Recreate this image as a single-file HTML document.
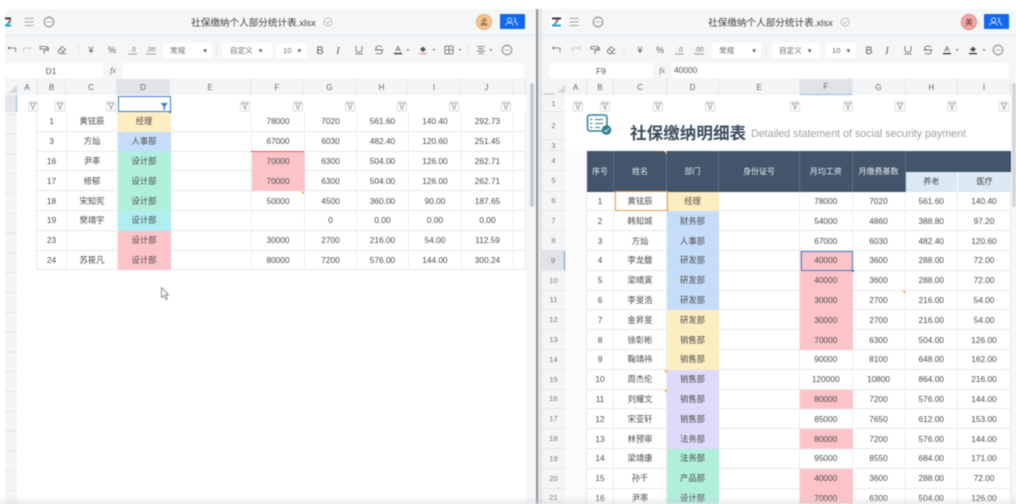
<!DOCTYPE html>
<html><head><meta charset="utf-8"><style>
*{margin:0;padding:0;box-sizing:border-box}
html,body{width:1016px;height:504px;overflow:hidden;background:#fff}
body{font-family:"Liberation Sans","Noto Sans CJK SC",sans-serif;color:#4c4c4c;font-size:8.3px}
#root{position:absolute;left:0;top:0;width:1016px;height:504px;overflow:hidden;filter:blur(.5px);background:#fff}
.a{position:absolute}
.w{background:#fff;border-radius:1px}
.t{position:absolute;display:flex;align-items:center;justify-content:center;white-space:nowrap}
.g{position:absolute;display:grid;grid-auto-rows:19.8px}
.g>b{font-weight:400;display:flex;align-items:center;justify-content:center;border-right:1px solid #eaecee;border-bottom:1px solid #e6e8ea;background:#fff;color:#4c4c4c;white-space:nowrap}
.g>b.y{background:#fdeec1;border-right-color:#fdeec1;border-bottom-color:#fdeec1}
.g>b.l{background:#c5ddf9;border-right-color:#c5ddf9;border-bottom-color:#c5ddf9}
.g>b.n{background:#b1efdd;border-right-color:#b1efdd;border-bottom-color:#b1efdd}
.g>b.c{background:#b1eef0;border-right-color:#b1eef0;border-bottom-color:#b1eef0}
.g>b.p{background:#fcc4c9;border-right-color:#fcc4c9;border-bottom-color:#fcc4c9}
.g>b.u{background:#e1d9fa;border-right-color:#e1d9fa;border-bottom-color:#e1d9fa}
.ch{position:absolute;top:79px;height:16px;background:#f3f5f7;display:flex;align-items:center;justify-content:center;border-right:1px solid #e6e8ea;color:#666;font-size:8px}
.rh{position:absolute;left:542px;width:23px;display:flex;align-items:center;justify-content:center;background:#f3f5f7;border-bottom:1px solid #e4e6e9;color:#777;font-size:7.6px}
.hd{position:absolute;display:flex;align-items:center;justify-content:center;background:#42556a;color:#e8edf2;border-right:1px solid #5f6f82;font-size:8px}
.sel{position:absolute;height:15px;background:#fff;top:42.5px;color:#666;font-size:7.6px;display:flex;align-items:center}
</style></head><body><div id="root">

<!-- panes base -->
<div class="a" style="left:5px;top:9px;width:531px;height:495px;background:#f4f6f8;border-top-left-radius:6px"></div>
<div class="a" style="left:538px;top:9px;width:478px;height:495px;background:#f4f6f8"></div>
<div class="a" style="left:536px;top:9px;width:2px;height:495px;background:#8f9397"></div>
<div class="a" style="left:538px;top:9px;width:4px;height:495px;background:#e3e5e7"></div>
<div class="a" style="left:5px;top:35px;width:531px;height:1px;background:#e3e6e9"></div>
<div class="a" style="left:538px;top:35px;width:478px;height:1px;background:#e3e6e9"></div>

<!-- titles -->
<div class="t" style="left:190px;top:14px;width:127px;height:16px;font-size:9.6px;color:#444">社保缴纳个人部分统计表.xlsx</div>
<div class="t" style="left:707px;top:14px;width:127px;height:16px;font-size:9.6px;color:#444">社保缴纳个人部分统计表.xlsx</div>

<!-- avatars and share -->
<div class="t" style="left:476px;top:14px;width:16px;height:16px;border-radius:50%;background:#f6c491;border:1px solid #f0a862;font-size:8px;color:#5b4326">孟</div>
<div class="t" style="left:961px;top:14px;width:16px;height:16px;border-radius:50%;background:#f7a9a9;border:1px solid #ea7d7d;font-size:8px;color:#5b3030">美</div>
<div class="a" style="left:500px;top:14px;width:25px;height:15px;background:#1267ee;border-radius:1px"></div>
<div class="a" style="left:984px;top:14px;width:25px;height:15px;background:#1267ee;border-radius:1px"></div>

<!-- selects left -->
<div class="sel" style="left:163px;width:49px;padding-left:7px">常规<span style="margin-left:18px">▾</span></div>
<div class="sel" style="left:222px;width:50px;padding-left:8px">自定义<span style="margin-left:6px">▾</span></div>
<div class="sel" style="left:276px;width:31px;padding-left:7px">10<span style="margin-left:6px">▾</span></div>
<!-- selects right -->
<div class="sel" style="left:712px;width:49px;padding-left:7px">常规<span style="margin-left:18px">▾</span></div>
<div class="sel" style="left:772px;width:48px;padding-left:7px">自定义<span style="margin-left:6px">▾</span></div>
<div class="sel" style="left:826px;width:30px;padding-left:6px">10<span style="margin-left:6px">▾</span></div>

<!-- formula bars -->
<div class="t w" style="left:5px;top:63px;width:98px;height:15px;color:#555;font-size:8.4px;padding-right:6px">D1</div>
<div class="a w" style="left:123px;top:63px;width:401px;height:15px"></div>
<div class="t w" style="left:549px;top:63px;width:104px;height:15px;color:#555;font-size:8.4px">F9</div>
<div class="a w" style="left:672px;top:63px;width:337px;height:15px;font-size:8.4px;line-height:15px;padding-left:2px;color:#555">40000</div>
<div class="t" style="left:108px;top:63px;width:10px;height:15px;font:italic 8px 'Liberation Serif',serif;color:#666">fx</div>
<div class="t" style="left:657px;top:63px;width:10px;height:15px;font:italic 8px 'Liberation Serif',serif;color:#666">fx</div>

<!-- column headers left -->
<div class="a" style="left:5px;top:79px;width:12px;height:16px;background:#f3f5f7"></div>
<div class="ch" style="left:17px;width:21px">A</div>
<div class="ch" style="left:38px;width:28px">B</div>
<div class="ch" style="left:66px;width:51px">C</div>
<div class="ch" style="left:117px;width:53px;background:#e1e3e6">D</div>
<div class="ch" style="left:170px;width:81px">E</div>
<div class="ch" style="left:251px;width:53px">F</div>
<div class="ch" style="left:304px;width:52px">G</div>
<div class="ch" style="left:356px;width:52px">H</div>
<div class="ch" style="left:408px;width:53px">I</div>
<div class="ch" style="left:461px;width:52px">J</div>
<div class="ch" style="left:513px;width:13px"></div>

<!-- column headers right -->
<div class="a" style="left:542px;top:79px;width:23px;height:16px;background:#f3f5f7"></div>
<div class="ch" style="left:565px;width:22px">A</div>
<div class="ch" style="left:587px;width:27px">B</div>
<div class="ch" style="left:614px;width:53px">C</div>
<div class="ch" style="left:667px;width:52px">D</div>
<div class="ch" style="left:719px;width:81px">E</div>
<div class="ch" style="left:800px;width:52.5px;background:#e1e3e6;border-bottom:1px solid #8db8ea">F</div>
<div class="ch" style="left:852.5px;width:53px">G</div>
<div class="ch" style="left:905.5px;width:52.5px">H</div>
<div class="ch" style="left:958px;width:53px">I</div>

<!-- left sheet -->
<div class="a" style="left:17px;top:95px;width:509px;height:409px;background:#fff"></div>
<div class="a" style="left:5px;top:95px;width:12px;height:409px;background:repeating-linear-gradient(#f3f5f7 0,#f3f5f7 18.8px,#e2e4e7 18.8px,#e2e4e7 19.8px)"></div>
<div class="a" style="left:5px;top:95px;width:11px;height:17px;background:#e4e6e9"></div>
<div class="a" style="left:16px;top:95px;width:1px;height:17px;background:#8db8ea"></div>
<div class="g" style="left:36px;top:112px;width:490px;border-left:1px solid #e6e8ea;grid-template-columns:30px 51px 53px 81px 53px 52px 52px 53px 52px 12px">
<b>1</b><b>黄铉辰</b><b class="y">经理</b><b></b><b>78000</b><b>7020</b><b>561.60</b><b>140.40</b><b>292.73</b><b></b>
<b>3</b><b>方灿</b><b class="l">人事部</b><b></b><b>67000</b><b>6030</b><b>482.40</b><b>120.60</b><b>251.45</b><b></b>
<b>16</b><b>尹率</b><b class="n">设计部</b><b></b><b class="p">70000</b><b>6300</b><b>504.00</b><b>126.00</b><b>262.71</b><b></b>
<b>17</b><b>修郁</b><b class="n">设计部</b><b></b><b class="p">70000</b><b>6300</b><b>504.00</b><b>126.00</b><b>262.71</b><b></b>
<b>18</b><b>宋知宪</b><b class="n">设计部</b><b></b><b>50000</b><b>4500</b><b>360.00</b><b>90.00</b><b>187.65</b><b></b>
<b>19</b><b>樊靖宇</b><b class="c">设计部</b><b></b><b></b><b>0</b><b>0.00</b><b>0.00</b><b>0.00</b><b></b>
<b>23</b><b></b><b class="p">设计部</b><b></b><b>30000</b><b>2700</b><b>216.00</b><b>54.00</b><b>112.59</b><b></b>
<b>24</b><b>苏筱凡</b><b class="p">设计部</b><b></b><b>80000</b><b>7200</b><b>576.00</b><b>144.00</b><b>300.24</b><b></b>
</div>
<div class="a" style="left:251px;top:150.5px;width:53px;height:1.5px;background:#d9605f"></div>
<div class="a" style="left:117.5px;top:95.5px;width:53px;height:16.5px;border:1px solid #3f79cf"></div>
<div class="a" style="left:168.5px;top:110.5px;width:2.5px;height:2.5px;background:#2f6fd0"></div>
<div class="a" style="left:530px;top:83px;width:4px;height:124px;background:#c9cdd1;border-radius:2px"></div>

<!-- right sheet -->
<div class="a" style="left:565px;top:95px;width:446px;height:409px;background:#fff"></div>
<div class="a" style="left:565px;top:151px;width:22px;height:353px;background:#fafbfc"></div>
<div class="rh" style="top:95px;height:17px">1</div>
<div class="rh" style="top:112px;height:28px">2</div>
<div class="rh" style="top:140px;height:11px">3</div>
<div class="rh" style="top:151px;height:20px">4</div>
<div class="rh" style="top:171px;height:20.6px">5</div>
<div class="rh" style="top:191.6px;height:19.8px">6</div>
<div class="rh" style="top:211.4px;height:19.8px">7</div>
<div class="rh" style="top:231.2px;height:19.8px">8</div>
<div class="rh" style="top:251px;height:19.8px;background:#e1e3e6;border-right:1px solid #6d9fe0">9</div>
<div class="rh" style="top:270.8px;height:19.8px">10</div>
<div class="rh" style="top:290.6px;height:19.8px">11</div>
<div class="rh" style="top:310.4px;height:19.8px">12</div>
<div class="rh" style="top:330.2px;height:19.8px">13</div>
<div class="rh" style="top:350px;height:19.8px">14</div>
<div class="rh" style="top:369.8px;height:19.8px">15</div>
<div class="rh" style="top:389.6px;height:19.8px">16</div>
<div class="rh" style="top:409.4px;height:19.8px">17</div>
<div class="rh" style="top:429.2px;height:19.8px">18</div>
<div class="rh" style="top:449px;height:19.8px">19</div>
<div class="rh" style="top:468.8px;height:19.8px">20</div>
<div class="rh" style="top:488.6px;height:19.8px">21</div>

<div class="a" style="left:630px;top:123px;font-size:16.6px;font-weight:700;line-height:22px;color:#3c4d5f;white-space:nowrap">社保缴纳明细表</div>
<div class="a" style="left:751px;top:126px;font-size:10.7px;line-height:16px;color:#9a9fa5;white-space:nowrap">Detailed statement of social security payment</div>

<!-- table header -->
<div class="hd" style="left:587px;top:151px;width:27px;height:40.6px">序号</div>
<div class="hd" style="left:614px;top:151px;width:53px;height:40.6px">姓名</div>
<div class="hd" style="left:667px;top:151px;width:52px;height:40.6px">部门</div>
<div class="hd" style="left:719px;top:151px;width:81px;height:40.6px">身份证号</div>
<div class="hd" style="left:800px;top:151px;width:52.5px;height:40.6px">月均工资</div>
<div class="hd" style="left:852.5px;top:151px;width:53px;height:40.6px">月缴费基数</div>
<div class="hd" style="left:905.5px;top:151px;width:105.5px;height:20.5px;border-right:0"></div>
<div class="t" style="left:905.5px;top:171.5px;width:52.5px;height:20.1px;background:#dbe9f5;border-right:1px solid #fff;color:#444;font-size:8px">养老</div>
<div class="t" style="left:958px;top:171.5px;width:53px;height:20.1px;background:#dbe9f5;color:#444;font-size:8px">医疗</div>

<div class="g" style="left:586px;top:191.6px;width:425px;border-left:1px solid #e6e8ea;grid-template-columns:27px 53px 52px 81px 52.5px 53px 52.5px 53px">
<b>1</b><b>黄铉辰</b><b class="y">经理</b><b></b><b>78000</b><b>7020</b><b>561.60</b><b>140.40</b>
<b>2</b><b>韩知城</b><b class="l">财务部</b><b></b><b>54000</b><b>4860</b><b>388.80</b><b>97.20</b>
<b>3</b><b>方灿</b><b class="l">人事部</b><b></b><b>67000</b><b>6030</b><b>482.40</b><b>120.60</b>
<b>4</b><b>李龙馥</b><b class="l">研发部</b><b></b><b class="p">40000</b><b>3600</b><b>288.00</b><b>72.00</b>
<b>5</b><b>梁晴寅</b><b class="l">研发部</b><b></b><b class="p">40000</b><b>3600</b><b>288.00</b><b>72.00</b>
<b>6</b><b>李旻浩</b><b class="l">研发部</b><b></b><b class="p">30000</b><b>2700</b><b>216.00</b><b>54.00</b>
<b>7</b><b>金昇旻</b><b class="y">研发部</b><b></b><b class="p">30000</b><b>2700</b><b>216.00</b><b>54.00</b>
<b>8</b><b>徐彰彬</b><b class="y">销售部</b><b></b><b class="p">70000</b><b>6300</b><b>504.00</b><b>126.00</b>
<b>9</b><b>鞠靖祎</b><b class="y">销售部</b><b></b><b>90000</b><b>8100</b><b>648.00</b><b>162.00</b>
<b>10</b><b>周杰伦</b><b class="u">销售部</b><b></b><b>120000</b><b>10800</b><b>864.00</b><b>216.00</b>
<b>11</b><b>刘耀文</b><b class="u">销售部</b><b></b><b class="p">80000</b><b>7200</b><b>576.00</b><b>144.00</b>
<b>12</b><b>宋亚轩</b><b class="u">销售部</b><b></b><b>85000</b><b>7650</b><b>612.00</b><b>153.00</b>
<b>13</b><b>林预审</b><b class="u">法务部</b><b></b><b class="p">80000</b><b>7200</b><b>576.00</b><b>144.00</b>
<b>14</b><b>梁靖康</b><b class="n">法务部</b><b></b><b>95000</b><b>8550</b><b>684.00</b><b>171.00</b>
<b>15</b><b>孙千</b><b class="n">产品部</b><b></b><b class="p">40000</b><b>3600</b><b>288.00</b><b>72.00</b>
<b>16</b><b>尹率</b><b class="n">设计部</b><b></b><b class="p">70000</b><b>6300</b><b>504.00</b><b>126.00</b>
</div>
<div class="a" style="left:614.5px;top:191.4px;width:53px;height:20px;border:1px solid #e59a3c"></div>
<div class="a" style="left:800.5px;top:251px;width:52.5px;height:20px;border:1px solid #3f79cf"></div>
<div class="a" style="left:851.5px;top:269.5px;width:2.5px;height:2.5px;background:#2f6fd0"></div>
<div class="a" style="left:1012px;top:83px;width:4px;height:124px;background:#d5d8db;border-radius:2px"></div>

<!-- icons -->
<svg class="a" style="left:0;top:0;z-index:3" width="1016" height="504" viewBox="0 0 1016 504">
<defs>
<g id="f"><rect x="-4.5" y="-4.5" width="9" height="9.5" rx="1" fill="#fff" stroke="#cfd2d5" stroke-width=".8"/><path d="M-2.8-2.8H2.800L.8 0V2.800H-.8V0Z" fill="none" stroke="#808488" stroke-width=".7"/></g>
<g id="ham" fill="none" stroke="#888" stroke-width=".8"><path d="M-4.500-3.500h9M-4.500 0h9M-4.500 3.500h9"/></g>
<g id="more"><circle r="4.800" fill="none" stroke="#666" stroke-width=".8"/><circle cx="-2" r=".55" fill="#666"/><circle r=".55" fill="#666"/><circle cx="2" r=".55" fill="#666"/></g>
<g id="ck"><circle r="4" fill="none" stroke="#aaa" stroke-width=".7"/><path d="M-1.800 0l1.300 1.400L2-1.300" fill="none" stroke="#aaa" stroke-width=".7"/></g>
<g id="sh" fill="none" stroke="#d6e6ff" stroke-width=".9"><circle cx="-2.500" cy="-2" r="2.100"/><path d="M-6.500 3.500Q-6 .8-2.500.8T1.500 3.500"/><path d="M1.800-4A2 2 0 0 1 2.500-.3Q5 .2 5.500 3.500"/></g>
<g id="z"><path d="M-4.500-4.500H4.500V-2.600H-4.500Z" fill="#243447"/><path d="M3-2.600H.8L-2-.2H.4Z" fill="#e2393b"/><path d="M-3.800 2.600H-1.500L2 -.2H-.4Z" fill="#19a974"/><path d="M-4.500 2.600H4.500V4.500H-4.500Z" fill="#1f9bd8"/></g>
<g id="un" fill="none" stroke="#666" stroke-width=".8"><path d="M-4-2H3.500V2M-4-2l1.600-1.200M-4-2l1.600 1.200"/></g>
<g id="re" fill="none" stroke="#c4c7ca" stroke-width=".8"><path d="M4-2H-3.500V2M4-2L2.400-3.200M4-2L2.400-.8"/></g>
<g id="pa" fill="none" stroke="#666" stroke-width=".8"><path d="M-4-3.500H3V-1H-4ZM3-2.200H4.500V.4H0V4"/></g>
<g id="er" fill="none" stroke="#666" stroke-width=".8"><path d="M-4 1L0-3.500 3.500-.5-.5 3.500H-2.500ZM-2-1L1.500 2M-.5 3.500H4.500"/></g>
<g id="sep"><path d="M0-5V5" stroke="#dde0e3" stroke-width=".8"/></g>
<g id="bd" fill="none" stroke="#666" stroke-width=".8"><rect x="-4" y="-3.800" width="8" height="7.600"/><path d="M0-3.800V3.800M-4 0H4"/></g>
<g id="al" fill="none" stroke="#666" stroke-width=".8"><path d="M-4-3.500H4M-2.500-1.200H2.500M-4 1.200H4M-2.500 3.500H2.500"/></g>
<g id="un2" fill="none" stroke="#666" stroke-width=".8"><path d="M-3-4V0Q-3 2.200 0 2.200T3 0V-4M-4 4H4"/></g>
<g id="st" fill="none" stroke="#666" stroke-width=".8"><path d="M3-3Q0-5-3-3V-1Q0 1 3-.3V3Q0 5-3 3M-4.500 0H4.500"/></g>
<g id="fa"><path d="M-2.500 1.500L0-3.500 2.500 1.500M-1.500-.3H1.500" fill="none" stroke="#666" stroke-width=".8"/><path d="M-4 3.600H4" stroke="#222" stroke-width="1.200"/></g>
<g id="ff"><path d="M-3-.5L0-3.500 3-.5 0 2Z" fill="#555"/><path d="M-4 3.600H4" stroke="#e8838a" stroke-width="1"/></g>
<g id="ff2"><path d="M-3-.5L0-3.500 3-.5 0 2Z" fill="#555"/><path d="M-4 3.600H4" stroke="#222" stroke-width="1.200"/></g>
<path id="dn" d="M-1.400-.7H1.400L0 .9Z" fill="#555"/>
<g id="nt"><path d="M-3.500 0H0V3.500Z" fill="#eeb464"/></g>
</defs>

<!-- left top bar -->
<svg x="5" y="17" width="6" height="10" viewBox="-4.500 -5 6 10" overflow="hidden"><use href="#z"/></svg>
<use href="#ham" x="29" y="22"/><use href="#more" x="49" y="22"/><use href="#ck" x="328" y="22"/>
<use href="#sh" x="512" y="22"/>
<!-- left toolbar -->
<svg x="5" y="44" width="12" height="12" viewBox="-1 -6 12 12"><use href="#un" x="6"/></svg>
<use href="#re" x="27" y="50"/><use href="#pa" x="44" y="50"/><use href="#er" x="62" y="50"/><use href="#sep" x="79" y="50"/>
<text x="91" y="53" font-size="9" fill="#666" text-anchor="middle">¥</text>
<text x="112" y="53" font-size="9" fill="#666" text-anchor="middle">%</text>
<text x="133" y="51.500" font-size="6.500" fill="#666" text-anchor="middle">.0</text><path d="M128 54h9" stroke="#666" stroke-width=".6"/>
<text x="151" y="51.500" font-size="6.500" fill="#666" text-anchor="middle">.00</text><path d="M146 54h10" stroke="#666" stroke-width=".6"/>
<use href="#sep" x="217" y="50"/>
<text x="320" y="54" font-size="11" fill="#666" text-anchor="middle" font-family="Liberation Sans">B</text>
<text x="338" y="54" font-size="11" font-style="italic" fill="#666" text-anchor="middle" font-family="Liberation Serif">I</text>
<use href="#un2" x="359" y="50"/><use href="#st" x="379" y="50"/>
<use href="#fa" x="398" y="50"/><use href="#dn" x="408" y="50"/><use href="#ff" x="423" y="50"/><use href="#dn" x="434" y="50"/>
<use href="#bd" x="449" y="50"/><use href="#dn" x="460" y="50"/><use href="#sep" x="468" y="50"/><use href="#al" x="481" y="50"/><use href="#dn" x="491" y="50"/><use href="#more" x="507" y="50"/>
<!-- corner triangle left -->
<path d="M17 85V93H9Z" fill="#d5d8db"/>

<!-- right top bar -->
<rect x="549" y="15" width="15" height="14" fill="#fff"/>
<use href="#z" x="556.500" y="22"/><use href="#ham" x="574" y="22"/><use href="#more" x="598" y="22"/><use href="#ck" x="845" y="22"/>
<use href="#sh" x="996" y="22"/>
<!-- right toolbar -->
<use href="#un" x="556.500" y="50"/><use href="#re" x="576" y="50"/><use href="#pa" x="595" y="50"/><use href="#er" x="611" y="50"/><use href="#sep" x="624" y="50"/>
<text x="640" y="53" font-size="9" fill="#666" text-anchor="middle">¥</text>
<text x="660" y="53" font-size="9" fill="#666" text-anchor="middle">%</text>
<text x="680" y="51.500" font-size="6.500" fill="#666" text-anchor="middle">.0</text><path d="M675 54h9" stroke="#666" stroke-width=".6"/>
<text x="699" y="51.500" font-size="6.500" fill="#666" text-anchor="middle">.00</text><path d="M694 54h10" stroke="#666" stroke-width=".6"/>
<use href="#sep" x="766" y="50"/>
<text x="869" y="54" font-size="11" fill="#666" text-anchor="middle">B</text>
<text x="887" y="54" font-size="11" font-style="italic" fill="#666" text-anchor="middle" font-family="Liberation Serif">I</text>
<use href="#un2" x="908" y="50"/><use href="#st" x="928" y="50"/>
<use href="#fa" x="947" y="50"/><use href="#dn" x="957" y="50"/><use href="#ff2" x="973" y="50"/><use href="#dn" x="984" y="50"/><use href="#more" x="998" y="50"/>
<!-- corner triangle right -->
<path d="M565 85V93H557Z" fill="#d5d8db"/><path d="M543 94h12" stroke="#c4c7ca" stroke-width="1.200"/>

<!-- left filter icons -->
<use href="#f" x="33" y="106"/><use href="#f" x="60" y="106"/><use href="#f" x="111" y="106"/><use href="#f" x="245" y="106"/><use href="#f" x="298" y="106"/><use href="#f" x="350" y="106"/><use href="#f" x="402" y="106"/><use href="#f" x="454" y="106"/><use href="#f" x="506" y="106"/>
<path d="M160.500 103H168L165 106.500V110H163.500V106.500Z" fill="#3f79cf"/>
<!-- right filter icons -->
<use href="#f" x="578" y="106"/><use href="#f" x="605" y="106"/><use href="#f" x="658" y="106"/><use href="#f" x="710" y="106"/><use href="#f" x="795" y="106"/><use href="#f" x="848" y="106"/><use href="#f" x="900" y="106"/><use href="#f" x="952" y="106"/><use href="#f" x="1004" y="106"/>

<!-- notes -->
<use href="#nt" x="304" y="191.500"/><use href="#nt" x="667" y="151"/><use href="#nt" x="667" y="370"/><use href="#nt" x="667" y="389.800"/><use href="#nt" x="905.500" y="290.600"/>

<!-- sheet logo -->
<g fill="none" stroke="#2f7f93" stroke-width="1.500">
<path d="M604 131H590.500Q587.500 131 587.500 128V117.500Q587.500 115 590.500 115H604Q607 115 607 117.500V127"/>
<path d="M595 119.500H603M595 123.500H603M595 127.500H600" stroke-width="1"/><path d="M590 119.500H592.500M590 123.500H592.500M590 127.500H592.500" stroke-width="1"/>
</g>
<circle cx="606.500" cy="130" r="4.800" fill="#2f7f93"/><path d="M604.200 130l1.700 1.800 2.900-3.200" fill="none" stroke="#fff" stroke-width=".9"/>

<!-- cursor -->
<path d="M161.500 287.500V297.500L164 295.500L166 299.500L167.500 298.800L165.500 295H168.500Z" fill="#fff" stroke="#666" stroke-width=".7"/>
</svg>

<!-- bottom fade -->
<div class="a" style="left:0;top:496px;width:1016px;height:8px;z-index:4;background:linear-gradient(rgba(210,212,214,0),rgba(205,207,210,.4))"></div>
</div></body></html>
